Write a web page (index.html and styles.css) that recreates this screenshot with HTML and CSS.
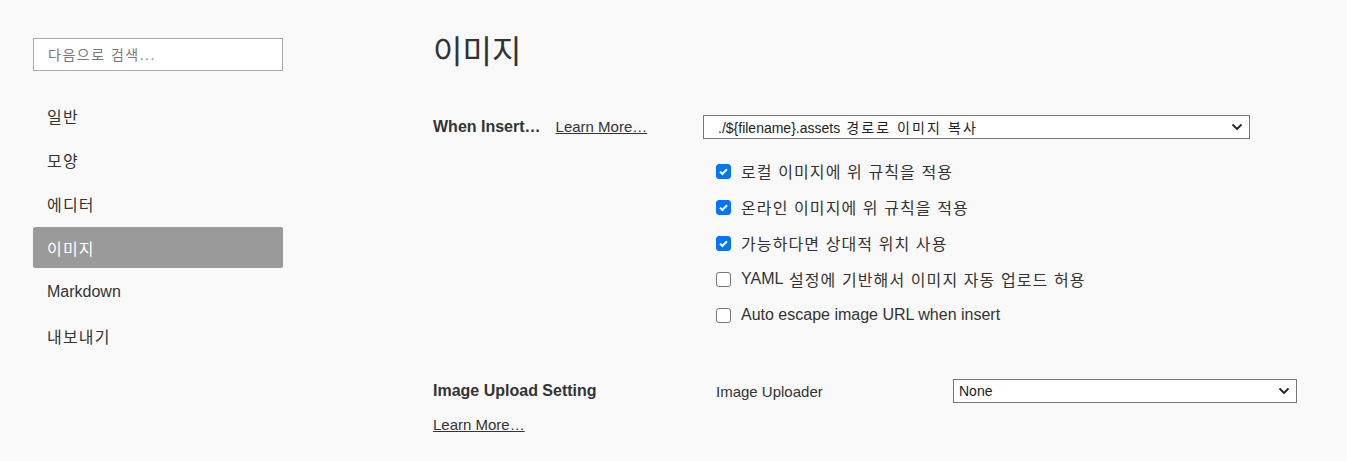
FILE: index.html
```html
<!DOCTYPE html>
<html lang="ko">
<head>
<meta charset="utf-8">
<link rel="stylesheet" href="styles.css">
</head>
<body>
<div class="app">
  <aside class="sidebar">
    <input class="search" type="text" placeholder="다음으로 검색...">
    <nav class="nav">
      <div class="nav-item ko">일반</div>
      <div class="nav-item ko">모양</div>
      <div class="nav-item ko">에디터</div>
      <div class="nav-item ko active">이미지</div>
      <div class="nav-item">Markdown</div>
      <div class="nav-item ko">내보내기</div>
    </nav>
  </aside>
  <main class="content">
    <h1 class="title">이미지</h1>
    <section class="row insert-row">
      <div class="label-col inline">
        <span class="label">When Insert…</span>
        <a class="learn">Learn More…</a>
      </div>
      <div class="value-col">
        <div class="select wide"><span>./${filename}.assets<span class="ko"> 경로로 이미지 복사</span></span>
          <svg class="chev" width="12" height="8" viewBox="0 0 12 8"><path d="M1.5 1.5 L6 6 L10.5 1.5" fill="none" stroke="#222" stroke-width="1.8"/></svg>
        </div>
        <div class="checks">
          <label class="check"><span class="box on"><svg width="13" height="13" viewBox="0 0 13 13"><path d="M3 6.6 L5.4 9 L10 4.2" fill="none" stroke="#fff" stroke-width="2"/></svg></span><span class="ko">로컬 이미지에 위 규칙을 적용</span></label>
          <label class="check"><span class="box on"><svg width="13" height="13" viewBox="0 0 13 13"><path d="M3 6.6 L5.4 9 L10 4.2" fill="none" stroke="#fff" stroke-width="2"/></svg></span><span class="ko">온라인 이미지에 위 규칙을 적용</span></label>
          <label class="check"><span class="box on"><svg width="13" height="13" viewBox="0 0 13 13"><path d="M3 6.6 L5.4 9 L10 4.2" fill="none" stroke="#fff" stroke-width="2"/></svg></span><span class="ko">가능하다면 상대적 위치 사용</span></label>
          <label class="check"><span class="box"></span>YAML<span class="ko"> 설정에 기반해서 이미지 자동 업로드 허용</span></label>
          <label class="check"><span class="box"></span>Auto escape image URL when insert</label>
        </div>
      </div>
    </section>
    <section class="row upload-row">
      <div class="label-col">
        <span class="label">Image Upload Setting</span>
        <a class="learn">Learn More…</a>
      </div>
      <div class="value-col upload">
        <span class="sublabel">Image Uploader</span>
        <div class="select narrow"><span>None</span>
          <svg class="chev" width="12" height="8" viewBox="0 0 12 8"><path d="M1.5 1.5 L6 6 L10.5 1.5" fill="none" stroke="#222" stroke-width="1.8"/></svg>
        </div>
      </div>
    </section>
  </main>
</div>
</body>
</html>
```

FILE: styles.css
```css
html, body {
  margin: 0;
  padding: 0;
  background: #f9f9f9;
  font-family: "Liberation Sans", "Noto Sans CJK KR", sans-serif;
  color: #333;
}
.app {
  display: flex;
  height: 461px;
  overflow: hidden;
}
.sidebar {
  width: 250px;
  padding: 38px 0 0 33px;
  flex: none;
}
.search {
  display: block;
  box-sizing: border-box;
  width: 250px;
  height: 33px;
  border: 1px solid #aaa;
  background: #fff;
  padding: 0 14px;
  font-family: inherit;
  font-size: 14px;
  color: #333;
  outline: none;
  letter-spacing: 1.5px;
}
.search::placeholder {
  color: #777;
}
.nav {
  margin-top: 24px;
  display: flex;
  flex-direction: column;
  gap: 3px;
}
.nav-item {
  height: 41px;
  display: flex;
  align-items: center;
  padding-left: 14px;
  font-size: 16px;
  color: #333;
  border-radius: 2px;
}
.nav-item.ko {
  letter-spacing: 1.2px;
}
.nav-item.active {
  background: #9a9a9a;
  color: #fff;
}
.content {
  margin-left: 150px;
  flex: 1;
  padding-top: 30px;
}
.title {
  margin: 0;
  font-size: 32px;
  font-weight: 400;
  line-height: 44px;
  color: #333;
}
.row {
  display: flex;
}
.insert-row {
  margin-top: 41px;
}
.label-col {
  width: 270px;
  flex: none;
  display: flex;
  flex-direction: column;
  align-items: flex-start;
}
.label-col.inline {
  flex-direction: row;
  align-items: center;
  height: 23px;
  gap: 15px;
}
.label {
  font-size: 16px;
  font-weight: 700;
  color: #333;
}
.learn {
  font-size: 15px;
  color: #333;
  text-decoration: underline;
}
.value-col {
  flex: 1;
}
.select {
  box-sizing: border-box;
  height: 24px;
  border: 1px solid #767676;
  background: #fff;
  display: flex;
  align-items: center;
  justify-content: space-between;
  padding: 0 6px 0 14px;
  font-size: 14px;
  color: #222;
}
.select .ko {
  letter-spacing: 2.1px;
}
.select.wide {
  width: 547px;
}
.select.narrow {
  width: 344px;
  padding-left: 5px;
}
.checks {
  margin-top: 14px;
  display: flex;
  flex-direction: column;
  padding-left: 13px;
}
.check {
  display: flex;
  align-items: center;
  height: 36px;
  font-size: 16px;
  color: #333;
  white-space: pre;
}
.check .ko {
  letter-spacing: 1.1px;
}
.box {
  box-sizing: border-box;
  width: 15px;
  height: 15px;
  border: 1px solid #767676;
  border-radius: 3px;
  background: #fff;
  margin-right: 10px;
  display: flex;
  align-items: center;
  justify-content: center;
}
.box.on {
  background: #0075ff;
  border-color: #0075ff;
}
.upload-row {
  margin-top: 46px;
}
.upload-row .label {
  line-height: 24px;
}
.upload-row .label-col .learn {
  margin-top: 13px;
}
.upload {
  display: flex;
  align-items: center;
  height: 24px;
  padding-left: 13px;
}
.sublabel {
  font-size: 15px;
  width: 237px;
  color: #333;
}
```
